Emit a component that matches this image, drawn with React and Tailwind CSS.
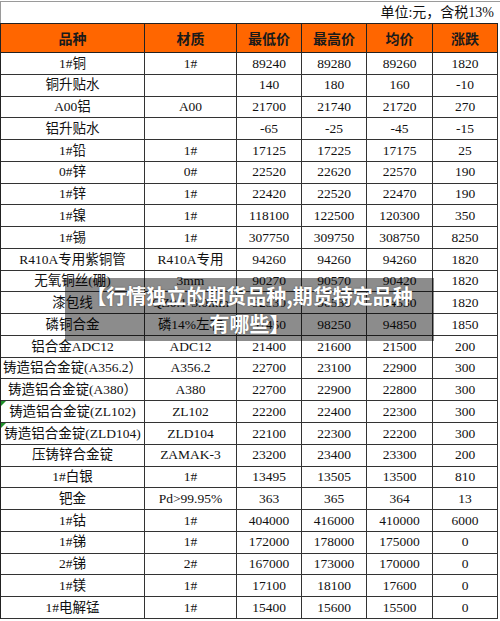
import React from "react";

const rows = [
  ["1#铜", "1#", "89240", "89280", "89260", "1820"],
  ["铜升贴水", "", "140", "180", "160", "-10"],
  ["A00铝", "A00", "21700", "21740", "21720", "270"],
  ["铝升贴水", "", "-65", "-25", "-45", "-15"],
  ["1#铅", "1#", "17125", "17225", "17175", "25"],
  ["0#锌", "0#", "22520", "22620", "22570", "190"],
  ["1#锌", "1#", "22420", "22520", "22470", "190"],
  ["1#镍", "1#", "118100", "122500", "120300", "350"],
  ["1#锡", "1#", "307750", "309750", "308750", "8250"],
  ["R410A专用紫铜管", "R410A专用", "94260", "94260", "94260", "1820"],
  ["无氧铜丝(硼)", "3mm", "90270", "90570", "90420", "1820"],
  ["漆包线", "QZ0.1-3.0mm", "92530", "96530", "94530", "1820"],
  ["磷铜合金", "磷14%左右", "91450", "98250", "94850", "1850"],
  ["铝合金ADC12", "ADC12", "21400", "21600", "21500", "200"],
  ["铸造铝合金锭(A356.2）", "A356.2", "22700", "23100", "22900", "300"],
  ["铸造铝合金锭(A380）", "A380", "22700", "22900", "22800", "300"],
  ["铸造铝合金锭(ZL102)", "ZL102", "22200", "22400", "22300", "300", true],
  ["铸造铝合金锭(ZLD104)", "ZLD104", "22100", "22300", "22200", "300", true],
  ["压铸锌合金锭", "ZAMAK-3", "23200", "23400", "23300", "200"],
  ["1#白银", "1#", "13495", "13505", "13500", "810"],
  ["钯金", "Pd>99.95%", "363", "365", "364", "13"],
  ["1#钴", "1#", "404000", "416000", "410000", "6000"],
  ["1#锑", "1#", "172000", "178000", "175000", "0"],
  ["2#锑", "2#", "167000", "173000", "170000", "0"],
  ["1#镁", "1#", "17100", "18100", "17600", "0"],
  ["1#电解锰", "1#", "15400", "15600", "15500", "0"],
];

const headers = ["品种", "材质", "最低价", "最高价", "均价", "涨跌"];

export default function App() {
  return (
    <div className="relative w-[500px] h-[621px] overflow-hidden bg-white text-[#111] font-['Liberation_Serif','Noto_Sans_CJK_SC',serif]">
      <div className="mt-[1px] h-[22px] border-t border-l border-[#9a9a9a] flex items-center justify-end pr-[6px] text-[14px] leading-none">
        单位:元，含税13%
      </div>
      <div className="grid grid-cols-[144px_92px_65px_65px_66px_65px] grid-rows-[29px] auto-rows-[21.77px] border-t border-l border-[#222] w-[498px]">
        {headers.map((h) => (
          <div
            key={h}
            className="flex items-center justify-center bg-[#ff6600] border-r border-b border-[#222] font-['Noto_Sans_CJK_SC',sans-serif] font-bold text-[14px] text-[#1a1a1a]"
          >
            {h}
          </div>
        ))}
        {rows.map((r, i) =>
          r.slice(0, 6).map((c, j) => (
            <div
              key={i + "-" + j}
              className="relative flex items-center justify-center border-r border-b border-[#333] text-[13.5px] leading-none whitespace-nowrap"
            >
              {j === 0 && r[6] && (
                <span className="absolute left-0 top-0 w-0 h-0 border-t-[5px] border-r-[5px] border-t-[#1f8f2a] border-r-transparent" />
              )}
              <span>{c}</span>
            </div>
          ))
        )}
      </div>
      <div className="absolute left-[65px] top-[278px] w-[369px] h-[63px] bg-black/45 flex flex-col items-center justify-center font-['Noto_Sans_CJK_SC',sans-serif] font-bold text-[20px] leading-[28px] text-white [text-shadow:0_0_2px_rgba(0,0,0,0.4)]">
        <div>【行情独立的期货品种,期货特定品种</div>
        <div>有哪些】</div>
      </div>
    </div>
  );
}
